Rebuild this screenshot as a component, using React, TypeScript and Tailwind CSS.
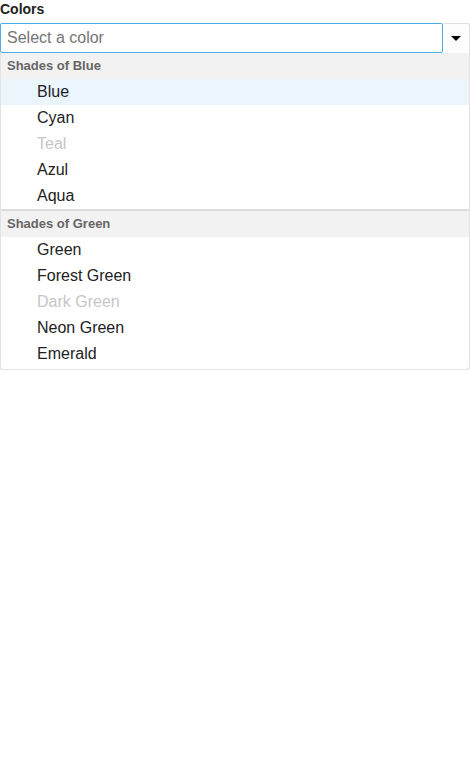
const groups = [
  {
    label: "Shades of Blue",
    items: [
      { name: "Blue", active: true },
      { name: "Cyan" },
      { name: "Teal", disabled: true },
      { name: "Azul" },
      { name: "Aqua" },
    ],
  },
  {
    label: "Shades of Green",
    items: [
      { name: "Green" },
      { name: "Forest Green" },
      { name: "Dark Green", disabled: true },
      { name: "Neon Green" },
      { name: "Emerald" },
    ],
  },
];

export default function App() {
  return (
    <div className="w-[470px] bg-white font-['Liberation_Sans',Arial,sans-serif] text-[#222]">
      <label className="block h-[23px] text-[14px] font-bold leading-[18px]">Colors</label>
      <div className="flex h-[30px]">
        <input
          placeholder="Select a color"
          className="h-[30px] flex-1 rounded-[2px] border border-[#4aaee8] px-[6px] text-[16px] text-[#222] outline-none placeholder:text-[#757575]"
        />
        <button className="flex w-[27px] items-center justify-center rounded-tr-[3px] border-t border-r border-[#e0e0e0] bg-[#fdfdfd]">
          <span className="block h-0 w-0 border-x-[5px] border-t-[5px] border-x-transparent border-t-black" />
        </button>
      </div>
      <div className="rounded-b-[4px] border border-t-0 border-[#e2e2e2] pb-[2px] shadow-[0_2px_4px_rgba(0,0,0,0.15)]">
        {groups.map((g, gi) => (
          <div key={g.label} className={gi > 0 ? "border-t-2 border-[#ddd]" : ""}>
            <div className="h-[26px] bg-[#f2f2f2] pl-[6px] text-[13px] font-bold leading-[26px] text-[#666]">
              {g.label}
            </div>
            {g.items.map((it) => (
              <div
                key={it.name}
                className={
                  "h-[26px] pl-[36px] text-[16px] leading-[26px] " +
                  (it.active ? "bg-[#ebf5fc] " : "") +
                  (it.disabled ? "text-[#c6c6c6]" : "text-[#222]")
                }
              >
                {it.name}
              </div>
            ))}
          </div>
        ))}
      </div>
    </div>
  );
}
